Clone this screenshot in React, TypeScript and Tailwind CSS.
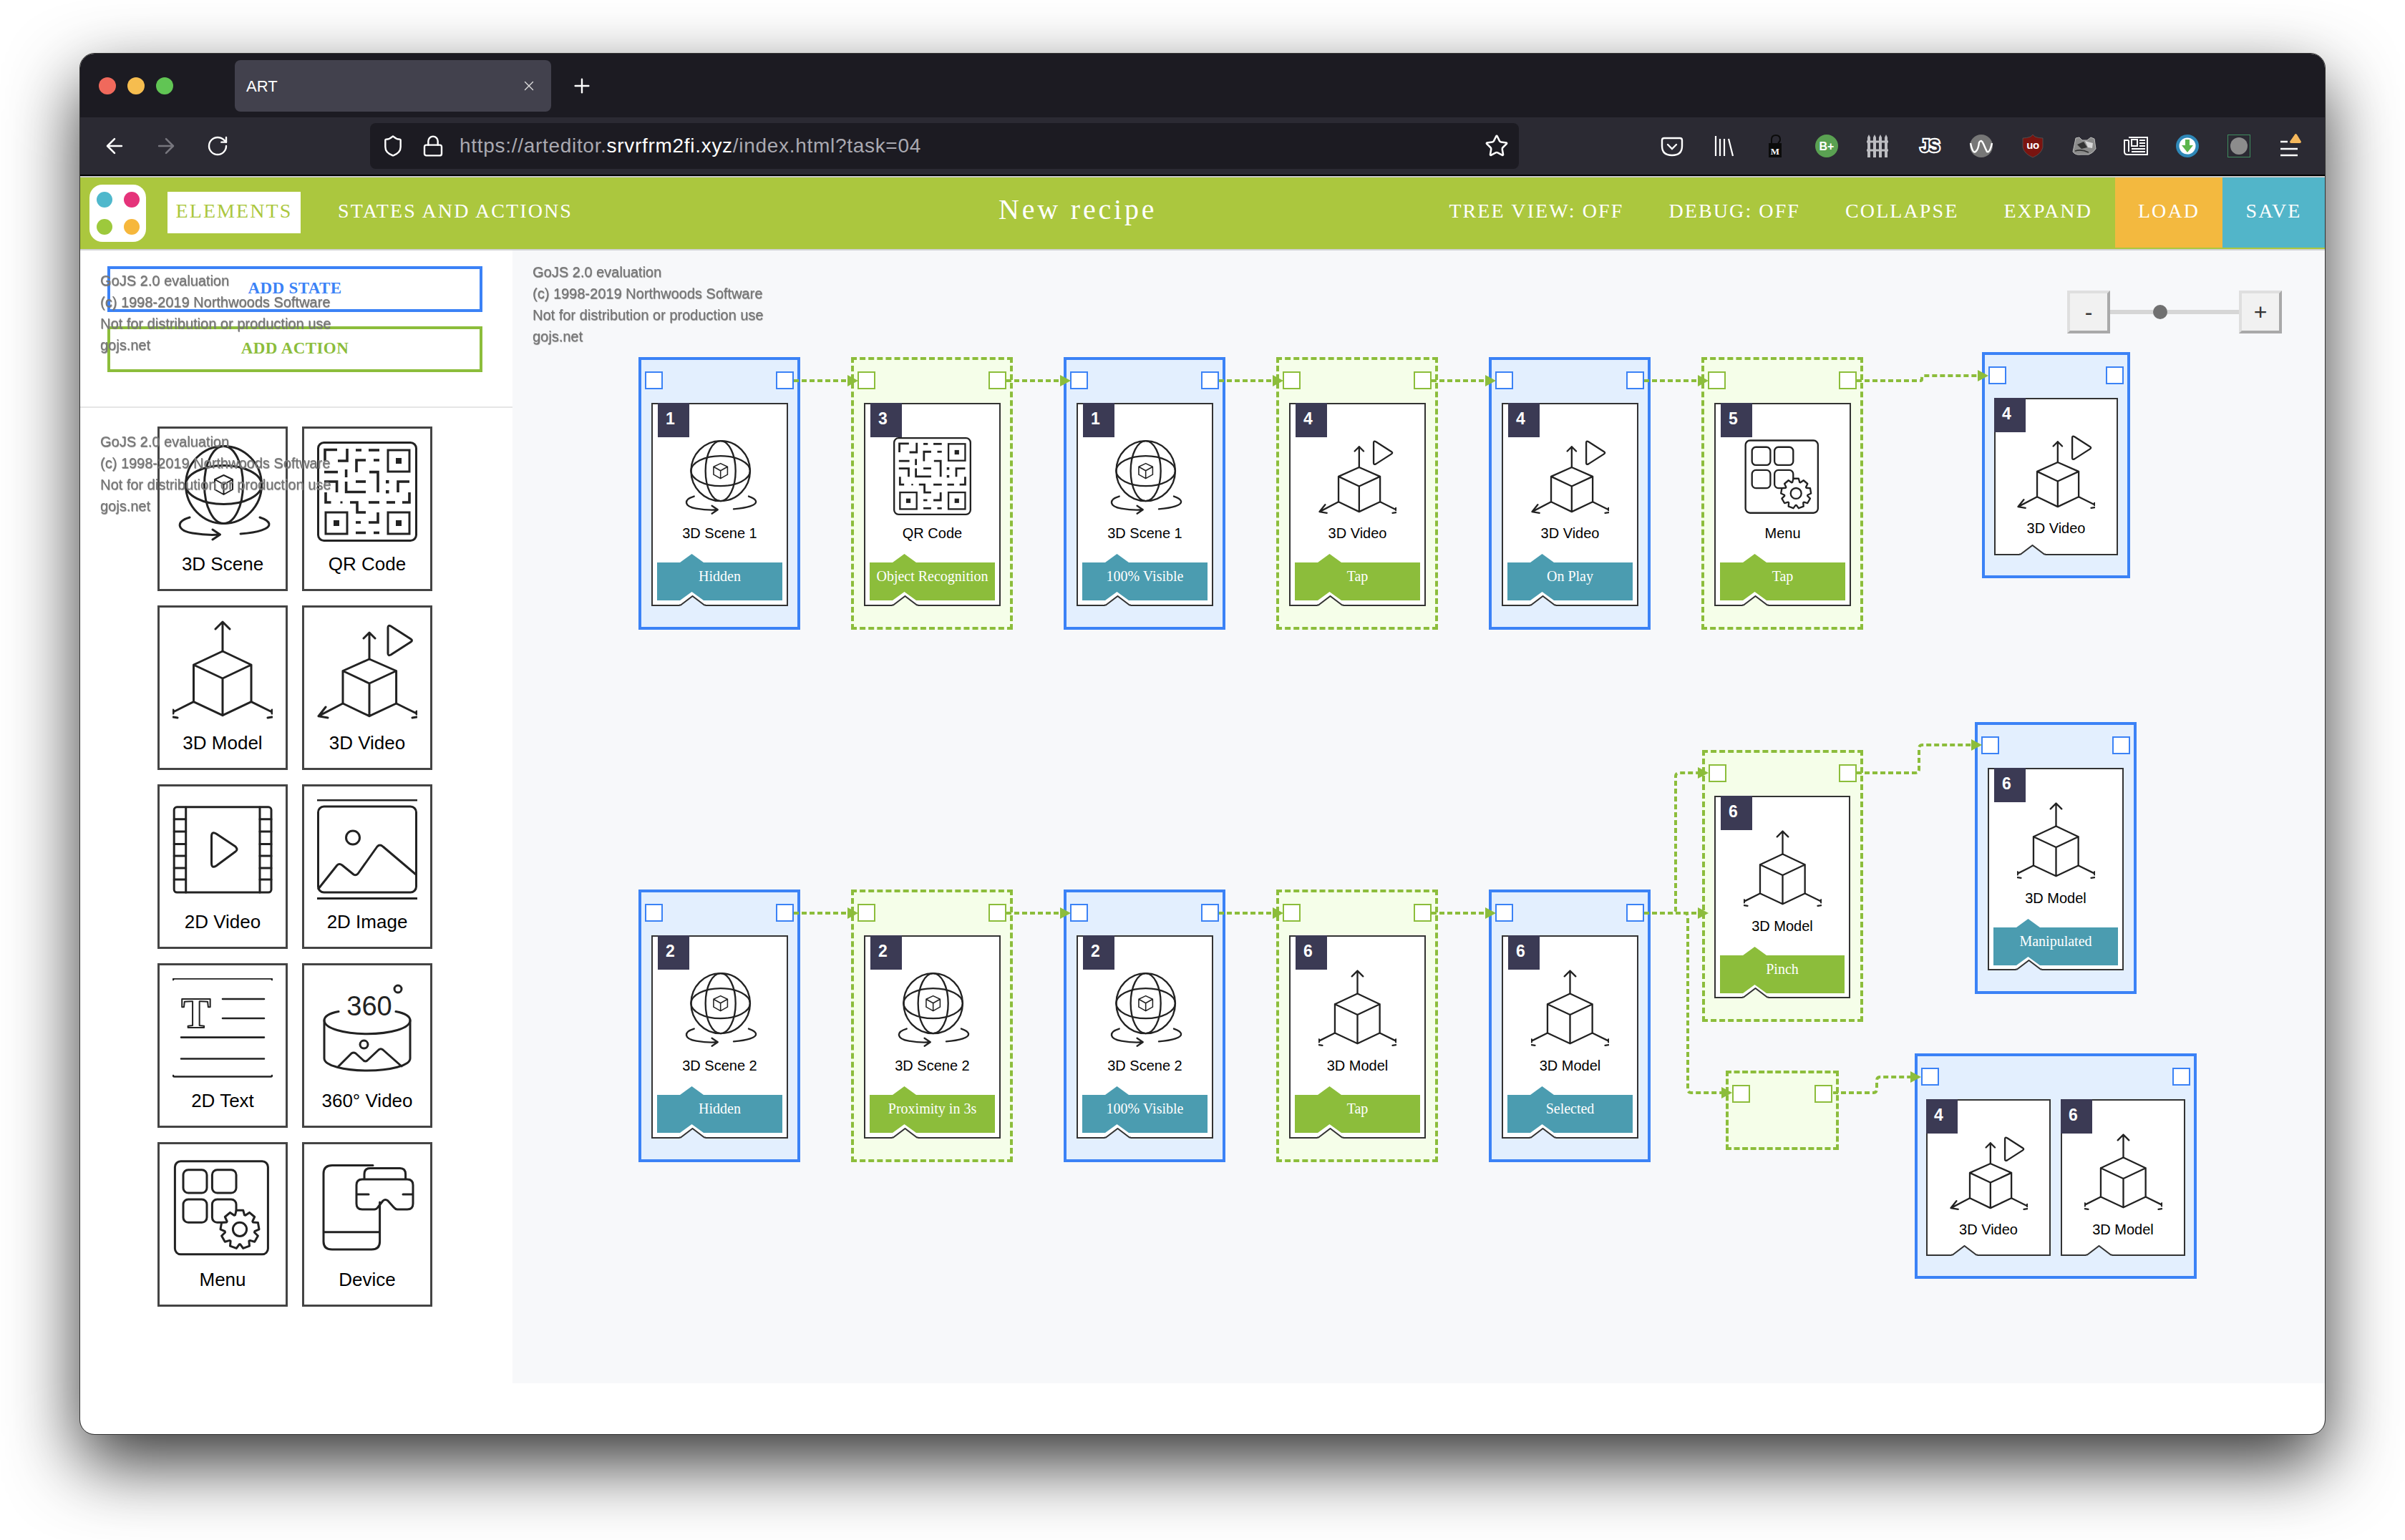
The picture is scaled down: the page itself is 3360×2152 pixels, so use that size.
import { ArrowLeft, ArrowRight, Lock, Plus, RotateCw, Shield, Star, X } from "lucide-react";
import type { ReactNode } from "react";

const INK = "#222";
const OX = 716;
const OY = 350;

function Svg({ size, children }: { size: number; children: ReactNode }) {
  return (
    <svg width={size} height={size} viewBox="0 0 140 140" fill="none" stroke={INK} strokeWidth={3} strokeLinecap="round" strokeLinejoin="round">
      {children}
    </svg>
  );
}

function gearPath(cx: number, cy: number, R: number, r: number, teeth: number) {
  const pts: string[] = [];
  const step = (Math.PI * 2) / teeth;
  for (let i = 0; i < teeth; i++) {
    const a = i * step - Math.PI / 2;
    const off = [[-0.5, r], [-0.28, R], [0.28, R], [0.5, r]];
    off.forEach(([k, rad]) => {
      const t = a + k * step * 0.9;
      pts.push(`${(cx + Math.cos(t) * rad).toFixed(1)} ${(cy + Math.sin(t) * rad).toFixed(1)}`);
    });
  }
  return "M" + pts.join("L") + "Z";
}

function SceneIcon({ size }: { size: number }) {
  return (
    <Svg size={size}>
      <ellipse cx="71.5" cy="60.5" rx="53" ry="54" />
      <ellipse cx="71.5" cy="60.5" rx="27" ry="54" />
      <ellipse cx="71.5" cy="60.5" rx="53" ry="27" />
      <path d="M71.5 47 L84 53 V67 L71.5 74 L59 67 V53 Z M59 53 L71.5 60 L84 53 M71.5 60 V74" strokeWidth={2} fill="#fff" />
      <path d="M24 106 C4 112 6 124 28 128 C40 130 54 131 66 130 M56 123 L66.5 130 L56 137" />
      <path d="M95 129 C120 127 136 122 135 115 C134 111 128 108 122 106" />
    </Svg>
  );
}

function QrIcon({ size }: { size: number }) {
  const segs = [
    "M11 27V11.5H28", "M42 10V27H29", "M54 12H62", "M72 12H87", "M68 26H55V43", "M79 26H87",
    "M10 42.6H29", "M40.6 39V50", "M73 42.6H85V71", "M10 56H27.6V71", "M40.6 56V70.5H68", "M54 56H68",
    "M113 71V56H129", "M12 71V85H19.5", "M46 85H56V99H68", "M72 85H87", "M97 85H109", "M119 85H129V71",
    "M85 99V113H72", "M54 113H61", "M54 127.5H68", "M79 127.5H87",
  ];
  const boxes = [[99, 12], [12, 99], [99, 99]];
  return (
    <Svg size={size}>
      <rect x="1.5" y="1.5" width="137" height="137" rx="8" />
      <g strokeWidth={3.6} strokeLinecap="butt" strokeLinejoin="miter">
        {segs.map((d) => <path key={d} d={d} />)}
      </g>
      {boxes.map(([x, y]) => (
        <g key={`${x}-${y}`}>
          <rect x={x} y={y} width="30" height="30" strokeLinejoin="miter" />
          <rect x={x + 11} y={y + 11} width="8" height="8" fill={INK} stroke="none" />
        </g>
      ))}
      <rect x="96" y="54" width="4.5" height="4.5" fill={INK} stroke="none" />
      <rect x="96" y="68" width="4.5" height="4.5" fill={INK} stroke="none" />
      <rect x="32.5" y="83.5" width="3" height="3" fill={INK} stroke="none" />
    </Svg>
  );
}

function ModelIcon({ size }: { size: number }) {
  return (
    <Svg size={size}>
      <path d="M70 43 V2 M60 12 L70 2 L80 12" />
      <path d="M70 43 L110 62 L70 81 L29.5 62 Z M29.5 62 V113.6 L70 132.7 L110 113.6 V62 M70 81 V132.7" />
      <path d="M29.5 113.6 L1 128 M1 125 V130 M1 135 L7 136 M110 113.6 L139 128 M139 125 V130 M139 135 L133 136" />
    </Svg>
  );
}

function VideoIcon({ size }: { size: number }) {
  return (
    <Svg size={size}>
      <path d="M73 54 V17 M65 25 L73 17 L81 25" />
      <path d="M73 54 L110.6 70.5 L73 88 L36 70.5 Z M36 70.5 V116 L73 133.7 L110.6 116 V70.5 M73 88 V133.7" />
      <path d="M36 116 L2 133.7 M2 133.7 L12 121 M2 133.7 L15 136 M110.6 116 L139 130 M139 127 V131 M139 135 L133 136" />
      <path d="M99 10 Q99 6 103 8 L131 26 Q134 28 131 30 L103 48 Q99 50 99 46 Z" />
    </Svg>
  );
}

function FilmIcon({ size }: { size: number }) {
  return (
    <Svg size={size}>
      <rect x="2.2" y="10.8" width="135.8" height="119.2" rx="4" />
      <path d="M18.7 11 V130 M122 11 V130" />
      {[27.7, 45, 62.5, 79, 96, 112].map((y) => <path key={y} d={`M2.2 ${y} H18.7 M122 ${y} H138`} />)}
      <path d="M54.5 52 Q54.5 44 61 48 L88 66 Q92 70.5 88 73 L61 93 Q54.5 97 54.5 89 Z" />
    </Svg>
  );
}

function ImageIcon({ size }: { size: number }) {
  return (
    <Svg size={size}>
      <path d="M0.5 1 H139.5 M0.5 138.6 H139.5" />
      <rect x="1.5" y="10" width="137" height="120" rx="8" />
      <ellipse cx="50" cy="53.5" rx="9.5" ry="9.5" />
      <path d="M2 124.7 L28 92 Q31 89 35 92 L51 105 Q54 107 57 104 L84 66 Q87.6 62 92 66 L138 105" />
    </Svg>
  );
}

function TextIcon({ size }: { size: number }) {
  return (
    <Svg size={size}>
      <path d="M1 2 Q1 0.5 3 0.5 H137 Q139 0.5 139 2 M1 136 Q1 137.5 3 137.5 H137 Q139 137.5 139 136" strokeWidth={2.6} />
      <text x="33" y="69" textAnchor="middle" fontFamily="Liberation Serif" fontWeight="700" fontSize="62" fill="#fff" stroke={INK} strokeWidth={2}>T</text>
      <path d="M70 29 H128 M70 56 H128 M12 82.6 H128 M12 112.5 H128" strokeWidth={2.6} />
    </Svg>
  );
}

function Video360Icon({ size }: { size: number }) {
  return (
    <Svg size={size}>
      <text x="73" y="52" textAnchor="middle" fontFamily="Liberation Sans" fontSize="38" fill={INK} stroke="none">360</text>
      <circle cx="113" cy="15" r="5" />
      <path d="M30 46.5 C16 49 10 54 10 59 C10 70 38 77.7 70 77.7 C102 77.7 130 70 130 59 C130 54 124 49 110 46.5" />
      <path d="M10 59 V112 C10 122 38 129 70 129 C102 129 130 122 130 112 V59" />
      <path d="M30 123 L48 105 Q51 103 54 105 L65 115 Q67.5 117 70 115 L86 100 Q89 97.6 92 100 L118 123" />
      <circle cx="65.5" cy="92.6" r="5.5" />
    </Svg>
  );
}

function MenuIcon({ size }: { size: number }) {
  return (
    <Svg size={size}>
      <rect x="3.4" y="5.8" width="130" height="130" rx="8" />
      <rect x="15" y="17.7" width="33" height="32.3" rx="7" />
      <rect x="55.4" y="17.7" width="33.6" height="32.3" rx="7" />
      <rect x="15" y="59" width="33" height="32.3" rx="7" />
      <rect x="55.4" y="59" width="33.6" height="32.3" rx="7" />
      <path d={gearPath(94, 100.8, 27, 21, 9)} fill="#fff" />
      <circle cx="94" cy="100.8" r="9.6" />
    </Svg>
  );
}

function DeviceIcon({ size }: { size: number }) {
  return (
    <Svg size={size}>
      <path d="M78 11.5 H21 Q9 11.5 9 23 V118 Q9 129 21 129 H76 Q87.6 129 87.6 118 V63 M9 104.8 H87.6" />
      <path d="M66 30 V24 Q66 15.5 74 15.5 H116 Q123.6 15.5 123.6 24 V30" />
      <path d="M63 31 H126 Q134 31 134 39 V65 Q134 73 126 73 H112 Q109.5 73 107 70 L99 61 Q95.3 58 92 61 L85 70 Q83 73 80 73 H63 Q55 73 55 65 V39 Q55 31 63 31 Z M55 52 H72 M120 52 H134" />
    </Svg>
  );
}

const ICONS = {
  scene: SceneIcon, qr: QrIcon, model: ModelIcon, video: VideoIcon, film: FilmIcon,
  image: ImageIcon, text: TextIcon, v360: Video360Icon, menu: MenuIcon, device: DeviceIcon,
};
type IconName = keyof typeof ICONS;

const palette: [IconName, string][] = [
  ["scene", "3D Scene"], ["qr", "QR Code"], ["model", "3D Model"], ["video", "3D Video"], ["film", "2D Video"],
  ["image", "2D Image"], ["text", "2D Text"], ["v360", "360° Video"], ["menu", "Menu"], ["device", "Device"],
];

function Watermark({ className }: { className: string }) {
  return (
    <div className={`absolute text-[20px] leading-[30px] text-[#777] blur-[0.5px] [text-shadow:0.5px_0.5px_1px_#777] whitespace-nowrap font-['Liberation_Sans'] ${className}`}>
      <div>GoJS 2.0 evaluation</div>
      <div>(c) 1998-2019 Northwoods Software</div>
      <div>Not for distribution or production use</div>
      <div>gojs.net</div>
    </div>
  );
}

type CardData = { n: number; icon: IconName; label: string; band?: string; w?: number; h?: number };

function Card({ n, icon, label, band, w = 191, h = 284, action }: CardData & { action: boolean }) {
  const Icon = ICONS[icon];
  const bw = w - 16;
  const notchLeft = band ? 37 : 33;
  return (
    <div className="relative border-2 border-[#333] bg-white flex flex-col items-center shrink-0" style={{ width: w, height: h }}>
      <div
        className={`absolute top-[-2px] w-[44px] h-[48px] bg-[#3b3a54] text-white text-[23px] font-bold flex items-center pl-[11px] pb-[4px] ${band ? "left-[7px]" : "left-[-2px]"}`}
      >
        {n}
      </div>
      <div className="mt-[46px]"><Icon size={109} /></div>
      <div className="mt-[13px] text-[20px] leading-[24px] text-black whitespace-nowrap">{label}</div>
      {band && (
        <div className="relative mt-[29px] h-[53px] flex justify-center" style={{ width: bw }}>
          <svg className="absolute left-0 top-[-12px]" width={bw} height={65} viewBox={`0 -12 ${bw} 65`}>
            <polygon points={`0,0 32,0 48.5,-12 65,0 ${bw},0 ${bw},53 65,53 48.5,41 32,53 0,53`} fill={action ? "#8cbd3b" : "#4b9cb0"} />
          </svg>
          <span className="relative pt-[4px] text-[20px] leading-[30px] text-white whitespace-nowrap font-['Liberation_Serif']">{band}</span>
        </div>
      )}
      <svg className="absolute bottom-[-2px]" style={{ left: notchLeft }} width="37" height="15" viewBox="0 0 37 15">
        <polygon points="0,15 18.5,1 37,15" fill={action ? "#f5fee9" : "#e3effe"} />
        <polyline points="0,13.5 2,13.5 18.5,1 35,13.5 37,13.5" fill="none" stroke="#333" strokeWidth="2" />
      </svg>
    </div>
  );
}

type GroupData = { x: number; y: number; w: number; h: number; action?: boolean; pad?: number; gap?: number; cards?: CardData[] };

function Group({ x, y, w, h, action = false, pad = 14, gap = 0, cards = [] }: GroupData) {
  const sq = action ? "border-[#8cbd3b]" : "border-[#3b82f6]";
  return (
    <div
      className={`absolute flex items-start pt-[60px] ${action ? "border-[4px] border-dashed border-[#8cbd3b] bg-[#f5fee9]" : "border-[4px] border-[#3b82f6] bg-[#e3effe]"}`}
      style={{ left: x - OX, top: y - OY, width: w, height: h, paddingLeft: pad, columnGap: gap }}
    >
      <div className={`absolute top-[16px] left-[5px] w-[25px] h-[25px] bg-white border-2 ${sq}`} />
      <div className={`absolute top-[16px] right-[5px] w-[25px] h-[25px] bg-white border-2 ${sq}`} />
      {cards.map((c, i) => <Card key={i} {...c} action={action} />)}
    </div>
  );
}

const COLS = [892, 1189, 1486, 1783, 2080, 2377];
const groups: GroupData[] = [
  { x: COLS[0], y: 499, w: 226, h: 381, cards: [{ n: 1, icon: "scene", label: "3D Scene 1", band: "Hidden" }] },
  { x: COLS[1], y: 499, w: 226, h: 381, action: true, cards: [{ n: 3, icon: "qr", label: "QR Code", band: "Object Recognition" }] },
  { x: COLS[2], y: 499, w: 226, h: 381, cards: [{ n: 1, icon: "scene", label: "3D Scene 1", band: "100% Visible" }] },
  { x: COLS[3], y: 499, w: 226, h: 381, action: true, cards: [{ n: 4, icon: "video", label: "3D Video", band: "Tap" }] },
  { x: COLS[4], y: 499, w: 226, h: 381, cards: [{ n: 4, icon: "video", label: "3D Video", band: "On Play" }] },
  { x: COLS[5], y: 499, w: 226, h: 381, action: true, cards: [{ n: 5, icon: "menu", label: "Menu", band: "Tap" }] },
  { x: 2769, y: 492, w: 207, h: 316, pad: 13, cards: [{ n: 4, icon: "video", label: "3D Video", w: 173, h: 220 }] },
  { x: COLS[0], y: 1243, w: 226, h: 381, cards: [{ n: 2, icon: "scene", label: "3D Scene 2", band: "Hidden" }] },
  { x: COLS[1], y: 1243, w: 226, h: 381, action: true, cards: [{ n: 2, icon: "scene", label: "3D Scene 2", band: "Proximity in 3s" }] },
  { x: COLS[2], y: 1243, w: 226, h: 381, cards: [{ n: 2, icon: "scene", label: "3D Scene 2", band: "100% Visible" }] },
  { x: COLS[3], y: 1243, w: 226, h: 381, action: true, cards: [{ n: 6, icon: "model", label: "3D Model", band: "Tap" }] },
  { x: COLS[4], y: 1243, w: 226, h: 381, cards: [{ n: 6, icon: "model", label: "3D Model", band: "Selected" }] },
  { x: 2378, y: 1048, w: 225, h: 380, action: true, pad: 13, cards: [{ n: 6, icon: "model", label: "3D Model", band: "Pinch", w: 190, h: 283 }] },
  { x: 2759, y: 1009, w: 226, h: 380, pad: 14, cards: [{ n: 6, icon: "model", label: "3D Model", band: "Manipulated", w: 190, h: 283 }] },
  { x: 2411, y: 1496, w: 158, h: 111, action: true },
  { x: 2675, y: 1472, w: 394, h: 315, pad: 12, gap: 14, cards: [
    { n: 4, icon: "video", label: "3D Video", w: 174, h: 219 },
    { n: 6, icon: "model", label: "3D Model", w: 174, h: 219 },
  ] },
];

const straight = [0, 1, 2, 3, 4].flatMap((i) => [
  { d: `M${COLS[i] + 217} 532H${COLS[i + 1] - 2}`, x: COLS[i + 1] + 10, y: 532 },
  { d: `M${COLS[i] + 217} 1276H${COLS[i + 1] - 2}`, x: COLS[i + 1] + 10, y: 1276 },
]);
const links = [
  ...straight,
  { d: "M2594 532H2683Q2685 532 2685 530V527Q2685 525 2687 525H2766", x: 2778, y: 525 },
  { d: "M2297 1276H2336Q2341 1276 2341 1271V1085Q2341 1080 2346 1080H2375", x: 2387, y: 1080 },
  { d: "M2297 1276H2353Q2358 1276 2358 1281V1522Q2358 1527 2363 1527H2408", x: 2420, y: 1527 },
  { d: "M2594 1080H2676Q2681 1080 2681 1075V1046Q2681 1041 2686 1041H2757", x: 2769, y: 1041 },
  { d: "M2561 1527H2617Q2622 1527 2622 1522V1510Q2622 1505 2627 1505H2672", x: 2684, y: 1505 },
];

function Links() {
  return (
    <svg className="absolute inset-0 w-full h-full pointer-events-none" fill="none">
      <g transform={`translate(${-OX} ${-OY})`}>
        {links.map((l, i) => (
          <g key={i}>
            <path d={l.d} stroke="#8cbd3b" strokeWidth="4" strokeDasharray="7 4" />
            <polygon points={`${l.x - 15},${l.y - 8} ${l.x},${l.y} ${l.x - 15},${l.y + 8}`} fill="#8cbd3b" />
          </g>
        ))}
      </g>
    </svg>
  );
}

function ZoomButton({ label }: { label: string }) {
  return (
    <div className="w-[60px] h-[60px] border-[4px] border-t-[#dfdfdf] border-l-[#dfdfdf] border-r-[#a9a9a9] border-b-[#a9a9a9] bg-[#f1f1f1] flex items-center justify-center text-[#333] text-[32px] leading-none font-['Liberation_Sans']">
      {label}
    </div>
  );
}

function TI({ children }: { children: ReactNode }) {
  return (
    <div className="w-[72px] h-[36px] flex items-center justify-center">
      <svg width="36" height="36" viewBox="0 0 36 36" fill="none">{children}</svg>
    </div>
  );
}

function ToolbarIcons() {
  return (
    <div className="flex items-center ml-[178px]">
      <TI>
        <path d="M7 7H29Q32 7 32 10V18Q32 31 18 31Q4 31 4 18V10Q4 7 7 7Z" stroke="#fff" strokeWidth="2.4" />
        <path d="M12 16L18 22L24 16" stroke="#fff" strokeWidth="2.4" strokeLinecap="round" />
      </TI>
      <TI>
        <path d="M7 4V32M13 8V32M19 8V32M25 8L31 32" stroke="#fff" strokeWidth="2.2" />
      </TI>
      <TI>
        <path d="M13 14V9Q13 3 19 3Q25 3 25 9Q25 12 22 14" stroke="#0b0b0b" strokeWidth="2" />
        <rect x="9" y="14" width="18" height="20" fill="#0b0b0b" />
        <text x="18" y="30" textAnchor="middle" fontFamily="Liberation Serif" fontWeight="700" fontSize="13" fill="#fff">M</text>
      </TI>
      <TI>
        <circle cx="18" cy="18" r="16" fill="#5aa152" />
        <text x="18" y="24" textAnchor="middle" fontFamily="Liberation Sans" fontWeight="700" fontSize="16" fill="#fff">B+</text>
      </TI>
      <TI>
        <path d="M5 6V34M13 6V34M21 6V34M29 6V34" stroke="#bdbdc2" strokeWidth="4" />
        <path d="M3 6L5 2L7 6ZM11 6L13 2L15 6ZM19 6L21 2L23 6ZM27 6L29 2L31 6Z" fill="#bdbdc2" />
        <path d="M2 12H32M2 24H32" stroke="#bdbdc2" strokeWidth="3" />
      </TI>
      <TI>
        <text x="18" y="26" textAnchor="middle" fontFamily="Liberation Sans" fontWeight="700" fontSize="23" letterSpacing="-1" fill="#2b2a33" stroke="#fff" strokeWidth="4.5" style={{ paintOrder: "stroke" }}>JS</text>
      </TI>
      <TI>
        <circle cx="18" cy="18" r="16" fill="#777" />
        <path d="M3 14Q6 29 10 26T15 13Q18 8 21 15T26 26Q30 28 33 14" stroke="#fff" strokeWidth="2.4" />
      </TI>
      <TI>
        <path d="M18 2L21 5Q26 7 32 7V20Q30 29 18 34Q6 29 4 20V7Q10 7 15 5Z" fill="#7a1410" stroke="#555" strokeWidth="0.8" />
        <text x="18" y="22" textAnchor="middle" fontFamily="Liberation Sans" fontWeight="700" fontSize="15" letterSpacing="-0.5" fill="#fff">uo</text>
      </TI>
      <TI>
        <path d="M6 7L11 6L15 10H22L27 6L32 8L34 22Q30 28 24 30H13Q5 31 2 26L4 17Z" fill="#8b8b8b" stroke="#bdbdbd" strokeWidth="1" />
        <path d="M8 16L17 12L22 20L14 22Z" fill="#333" />
        <path d="M19 11L30 14L29 21L23 20Z" fill="#d8d8d8" />
        <path d="M5 25Q14 22 24 27" stroke="#333" strokeWidth="1.6" />
      </TI>
      <TI>
        <path d="M8 6H34V30H6Q2 30 2 26V10H8" stroke="#fff" strokeWidth="2" />
        <path d="M8 10V26" stroke="#fff" strokeWidth="2" />
        <rect x="12" y="9" width="8" height="9" stroke="#fff" strokeWidth="2" />
        <path d="M23 10H31M23 14H31M23 18H31M12 22H31M12 26H31" stroke="#fff" strokeWidth="1.8" />
      </TI>
      <TI>
        <circle cx="18" cy="18" r="16" fill="#2f88b8" />
        <circle cx="18" cy="18" r="11.5" fill="#fff" />
        <path d="M15 9H21V17H26L18 27L10 17H15Z" fill="#5cb54c" />
      </TI>
      <TI>
        <rect x="2.5" y="2.5" width="31" height="31" stroke="#3f8c5e" strokeWidth="1" />
        <circle cx="18" cy="18" r="12" fill="#8c8c8c" />
      </TI>
      <TI>
        <path d="M4 12H14M4 22H28M4 31H28" stroke="#fff" strokeWidth="2.4" />
        <path d="M24 2Q25 0 27 2L33 12Q33 14 31 14H19Q17 14 17 12Z" fill="#f5b85c" />
      </TI>
    </div>
  );
}

export default function App() {
  return (
    <div className="w-[3360px] h-[2152px] bg-white pl-[112px] pt-[75px] overflow-hidden font-['Liberation_Sans',sans-serif]">
      <div className="w-[3136px] h-[1929px] rounded-[20px] bg-white overflow-hidden flex flex-col shadow-[0_40px_100px_rgba(0,0,0,0.8)] outline outline-1 outline-[#333]">
        {/* tab strip */}
        <div className="h-[89px] bg-[#1c1b22] flex items-start shrink-0">
          <div className="flex items-center gap-[16px] ml-[26px] mt-[33px]">
            <div className="w-[24px] h-[24px] rounded-full bg-[#f0695c]" />
            <div className="w-[24px] h-[24px] rounded-full bg-[#f6bd4f]" />
            <div className="w-[24px] h-[24px] rounded-full bg-[#61c554]" />
          </div>
          <div className="ml-[86px] mt-[9px] w-[442px] h-[72px] rounded-[8px] bg-[#42414d] flex items-center justify-between pl-[16px] pr-[20px] text-white text-[22px]">
            <span>ART</span>
            <X size={22} strokeWidth={1.5} className="text-[#ddd]" />
          </div>
          <Plus size={32} strokeWidth={1.8} className="text-white ml-[27px] mt-[29px]" />
        </div>
        {/* toolbar */}
        <div className="h-[80px] bg-[#2b2a33] flex items-center pl-[12px] shrink-0">
          <div className="w-[72px] flex justify-center"><ArrowLeft size={34} strokeWidth={1.8} className="text-white" /></div>
          <div className="w-[72px] flex justify-center"><ArrowRight size={34} strokeWidth={1.8} className="text-[#77767e]" /></div>
          <div className="w-[72px] flex justify-center"><RotateCw size={32} strokeWidth={1.8} className="text-white" /></div>
          <div className="ml-[177px] w-[1605px] h-[64px] rounded-[8px] bg-[#1c1b22] flex items-center">
            <Shield size={32} strokeWidth={1.8} className="text-white ml-[16px]" />
            <Lock size={32} strokeWidth={1.8} className="text-white ml-[24px]" />
            <div className="ml-[21px] text-[28px] tracking-[0.7px] text-[#a9a9b1] whitespace-nowrap">
              https://arteditor.<span className="text-white">srvrfrm2fi.xyz</span>/index.html?task=04
            </div>
            <Star size={34} strokeWidth={1.8} className="text-white ml-auto mr-[14px]" />
          </div>
          <ToolbarIcons />
        </div>
        <div className="h-[2px] bg-black shrink-0" />
        <div className="h-[2px] bg-[#c9c9c9] shrink-0" />
        {/* app nav */}
        <div className="h-[100px] bg-[#abc73e] flex items-start text-white text-[28px] tracking-[2.1px] font-['Liberation_Serif'] shrink-0">
          <div className="ml-[13px] mt-[10px] w-[79px] h-[80px] rounded-[18px] bg-white grid grid-cols-[22px_22px] gap-[16px] place-content-center">
            <div className="w-[22px] h-[22px] rounded-full bg-[#4fb8cc]" />
            <div className="w-[22px] h-[22px] rounded-full bg-[#e5337a]" />
            <div className="w-[22px] h-[22px] rounded-full bg-[#9dc93c]" />
            <div className="w-[22px] h-[22px] rounded-full bg-[#f6b73c]" />
          </div>
          <div className="ml-[30px] mt-[20px] w-[186px] h-[58px] bg-white text-[#abc73e] flex items-center justify-center pb-[4px]">ELEMENTS</div>
          <div className="ml-[52px] h-[98px] flex items-center pb-[4px]">STATES AND ACTIONS</div>
          <div className="ml-[595px] h-[98px] flex items-center pb-[8px] text-[40px] tracking-[3.8px]">New recipe</div>
          <div className="ml-auto h-[98px] flex items-center gap-[63px] pr-[32px] pb-[4px]">
            <span>TREE VIEW: OFF</span>
            <span>DEBUG: OFF</span>
            <span>COLLAPSE</span>
            <span>EXPAND</span>
          </div>
          <div className="w-[150px] h-[98px] bg-[#f3b93f] flex items-center justify-center pb-[4px]">LOAD</div>
          <div className="w-[143px] h-[98px] bg-[#52b5c9] flex items-center justify-center pb-[4px]">SAVE</div>
        </div>
        <div className="h-[2px] bg-[#d0d2d4] shrink-0" />
        {/* content */}
        <div className="flex shrink-0 h-[1583px]">
          <aside className="relative w-[604px] shrink-0 bg-white">
            <div className="h-[220px] border-b-2 border-[#e6e6e6] pl-[38px] pt-[22px] flex flex-col gap-[20px]">
              <div className="w-[524px] h-[64px] border-[4px] border-[#3b82f6] flex items-center justify-center pb-[2px] text-[#3b82f6] text-[23px] font-bold tracking-[0.4px] font-['Liberation_Serif']">ADD STATE</div>
              <div className="w-[524px] h-[64px] border-[4px] border-[#8cbd3b] flex items-center justify-center pb-[2px] text-[#8cbd3b] text-[23px] font-bold tracking-[0.4px] font-['Liberation_Serif']">ADD ACTION</div>
            </div>
            <div className="ml-[108px] mt-[26px] grid grid-cols-[182px_182px] gap-x-[20px] gap-y-[20px]">
              {palette.map(([icon, label]) => {
                const Icon = ICONS[icon];
                return (
                  <div key={label} className="h-[230px] border-[3px] border-[#444] bg-white flex flex-col items-center pt-[18px]">
                    <Icon size={140} />
                    <div className="mt-[16px] text-[26px] leading-[30px] text-black whitespace-nowrap">{label}</div>
                  </div>
                );
              })}
            </div>
            <Watermark className="left-[28px] top-[27px]" />
            <Watermark className="left-[28px] top-[252px]" />
          </aside>
          <main className="relative flex-1 bg-[#f7f8fa] overflow-hidden">
            <Watermark className="left-[28px] top-[15px]" />
            {groups.map((g, i) => <Group key={i} {...g} />)}
            <Links />
            <div className="absolute left-[2172px] top-[56px] flex items-center">
              <ZoomButton label="-" />
              <div className="relative w-[180px] h-[6px] bg-[#d6d6d6]">
                <div className="absolute left-[60px] top-[-7px] w-[20px] h-[20px] rounded-full bg-[#707070]" />
              </div>
              <ZoomButton label="+" />
            </div>
          </main>
        </div>
      </div>
    </div>
  );
}
